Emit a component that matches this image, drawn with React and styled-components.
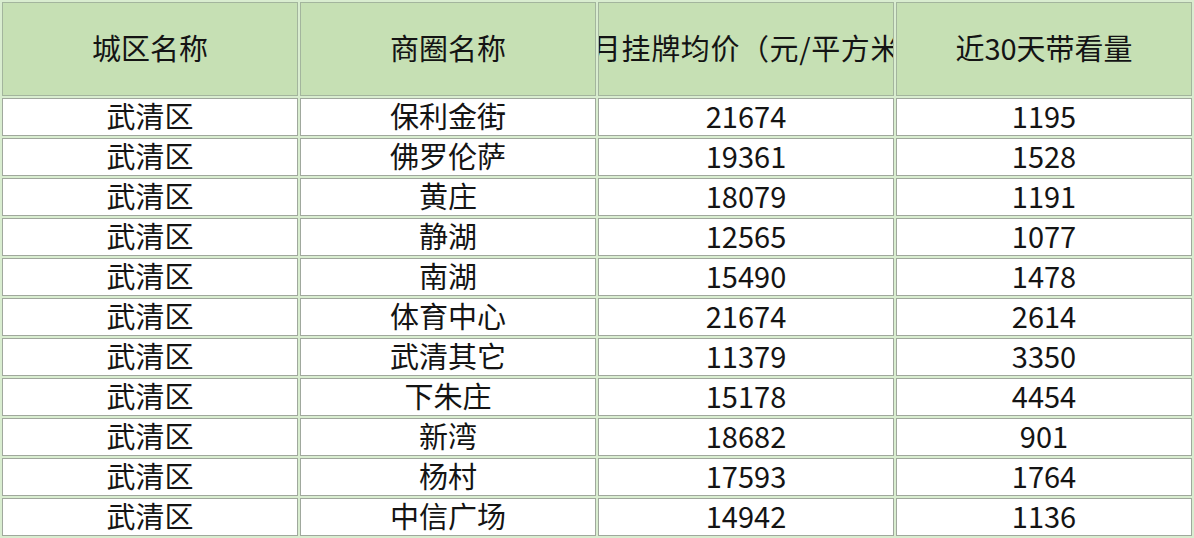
import React from 'react';
import styled, { createGlobalStyle } from 'styled-components';

const GlobalStyle = createGlobalStyle`
  html, body {
    margin: 0;
    padding: 0;
    background: #ffffff;
  }
`;

/* Table Style */
const Sheet = styled.table`
  width: 1194px;
  table-layout: fixed;
  border-collapse: separate;
  border-spacing: 2px;
  background-color: #d9edd0;
  font-family: "Noto Sans CJK SC", "Noto Sans", sans-serif;
  color: #141414;
`;

const HeadCell = styled.th`
  height: 88px;
  padding: 0 0 4px 0;
  border: 1px solid #a3b59d;
  background-color: #c6e0b4;
  font-size: 29px;
  font-weight: 400;
  overflow: hidden;
`;

const HeadLabel = styled.div`
  display: flex;
  justify-content: center;
  white-space: nowrap;
  overflow: hidden;
  line-height: 40px;
  letter-spacing: ${props => (props.$tight ? '0.6px' : '0')};
`;

const Cell = styled.td`
  height: 33px;
  padding: 0 0 3px 0;
  border: 1px solid #a0a89d;
  background-color: #ffffff;
  font-size: 29px;
  line-height: 33px;
  text-align: center;
  white-space: nowrap;
`;

const columns = ['城区名称', '商圈名称', '本月挂牌均价（元/平方米）', '近30天带看量'];

const rows = [
  ['武清区', '保利金街', 21674, 1195],
  ['武清区', '佛罗伦萨', 19361, 1528],
  ['武清区', '黄庄', 18079, 1191],
  ['武清区', '静湖', 12565, 1077],
  ['武清区', '南湖', 15490, 1478],
  ['武清区', '体育中心', 21674, 2614],
  ['武清区', '武清其它', 11379, 3350],
  ['武清区', '下朱庄', 15178, 4454],
  ['武清区', '新湾', 18682, 901],
  ['武清区', '杨村', 17593, 1764],
  ['武清区', '中信广场', 14942, 1136],
];

const App = () => {
  return (
    <>
      <GlobalStyle />
      <Sheet>
        <thead>
          <tr>
            {columns.map(col => (
              <HeadCell key={col}>
                <HeadLabel $tight={col.length > 10}><span>{col}</span></HeadLabel>
              </HeadCell>
            ))}
          </tr>
        </thead>
        <tbody>
          {rows.map((row, i) => (
            <tr key={i}>
              {row.map((value, j) => (
                <Cell key={j}>{value}</Cell>
              ))}
            </tr>
          ))}
        </tbody>
      </Sheet>
    </>
  );
};

export default App;
